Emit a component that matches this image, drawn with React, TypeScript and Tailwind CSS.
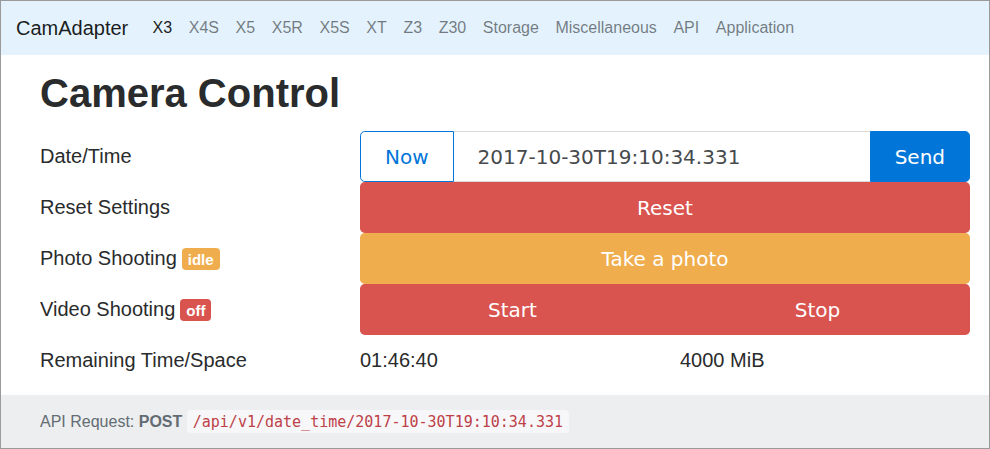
const navItems = ['X3', 'X4S', 'X5', 'X5R', 'X5S', 'XT', 'Z3', 'Z30', 'Storage', 'Miscellaneous', 'API', 'Application']

const btnFont = "font-['DejaVu_Sans',sans-serif] text-[20px] leading-[25px] pt-[2px]"

const Badge = ({ label, color }: { label: string; color: string }) => (
  <span
    className={`${color} inline-block align-baseline text-white font-bold text-[15px] leading-none px-[6px] py-[3.5px] rounded-[4px] ml-[5px]`}
  >
    {label}
  </span>
)

const Label = ({ children }: { children: React.ReactNode }) => (
  <div className="h-[51px] flex items-center text-[20px] pb-[2px]">
    <div>{children}</div>
  </div>
)

const App = () => {
  const dateTime = '2017-10-30T19:10:34.331'

  return (
    <div className="w-[990px] h-[449px] border border-[#9a9a9a] flex flex-col bg-white text-[#292b2c] font-['Liberation_Sans',Arial,sans-serif]">
      {/* Navbar */}
      <nav className="h-[54px] shrink-0 bg-[#e3f2fd] flex items-center pl-[15px]">
        <span className="text-[20px] text-black/90 mr-[16px]">CamAdapter</span>
        {navItems.map((item, i) => (
          <span
            key={item}
            className={`px-[8.3px] text-[16px] ${i === 0 ? 'text-black/90' : 'text-black/50'}`}
          >
            {item}
          </span>
        ))}
      </nav>

      <main className="pl-[39px] pr-[19px]">
        <h1 className="mt-[16px] mb-[16px] text-[40px] leading-[44px] font-bold">Camera Control</h1>

        <div className="grid grid-cols-[320px_610px]">
          <Label>Date/Time</Label>
          <div className="flex h-[51px]">
            <button className={`${btnFont} px-[24px] bg-white text-[#0275d8] border border-[#0275d8] rounded-l-[4.8px]`}>
              Now
            </button>
            <input
              readOnly
              value={dateTime}
              className={`${btnFont} flex-1 min-w-0 px-[24px] text-[#464a4c] border-y border-black/15 outline-none`}
            />
            <button className={`${btnFont} px-[24px] bg-[#0275d8] text-white border border-[#0275d8] rounded-r-[4.8px]`}>
              Send
            </button>
          </div>

          <Label>Reset Settings</Label>
          <button className={`${btnFont} h-[51px] w-full bg-[#d9534f] text-white rounded-[4.8px]`}>
            Reset
          </button>

          <Label>
            Photo Shooting
            <Badge label="idle" color="bg-[#f0ad4e]" />
          </Label>
          <button className={`${btnFont} h-[51px] w-full bg-[#f0ad4e] text-white rounded-[4.8px]`}>
            Take a photo
          </button>

          <Label>
            Video Shooting
            <Badge label="off" color="bg-[#d9534f]" />
          </Label>
          <div className="flex h-[51px] bg-[#d9534f] rounded-[4.8px]">
            <button className={`${btnFont} flex-1 text-white`}>Start</button>
            <button className={`${btnFont} flex-1 text-white`}>Stop</button>
          </div>

          <Label>Remaining Time/Space</Label>
          <div className="grid grid-cols-2 h-[51px] items-center text-[20px] pb-[2px]">
            <div>01:46:40</div>
            <div className="pl-[15px]">4000 MiB</div>
          </div>
        </div>
      </main>

      {/* Footer */}
      <footer className="mt-auto h-[53px] shrink-0 bg-[#eceeef] flex items-center pl-[39px] text-[16px] text-[#636c72]">
        <div>
          API Request: <b className="font-bold">POST</b>{' '}
          <code className="font-['DejaVu_Sans_Mono',monospace] text-[15px] text-[#bd4147] bg-[#f7f7f9] px-[6px] py-[2.5px] rounded-[4px]">
            /api/v1/date_time/{dateTime}
          </code>
        </div>
      </footer>
    </div>
  )
}

export default App
